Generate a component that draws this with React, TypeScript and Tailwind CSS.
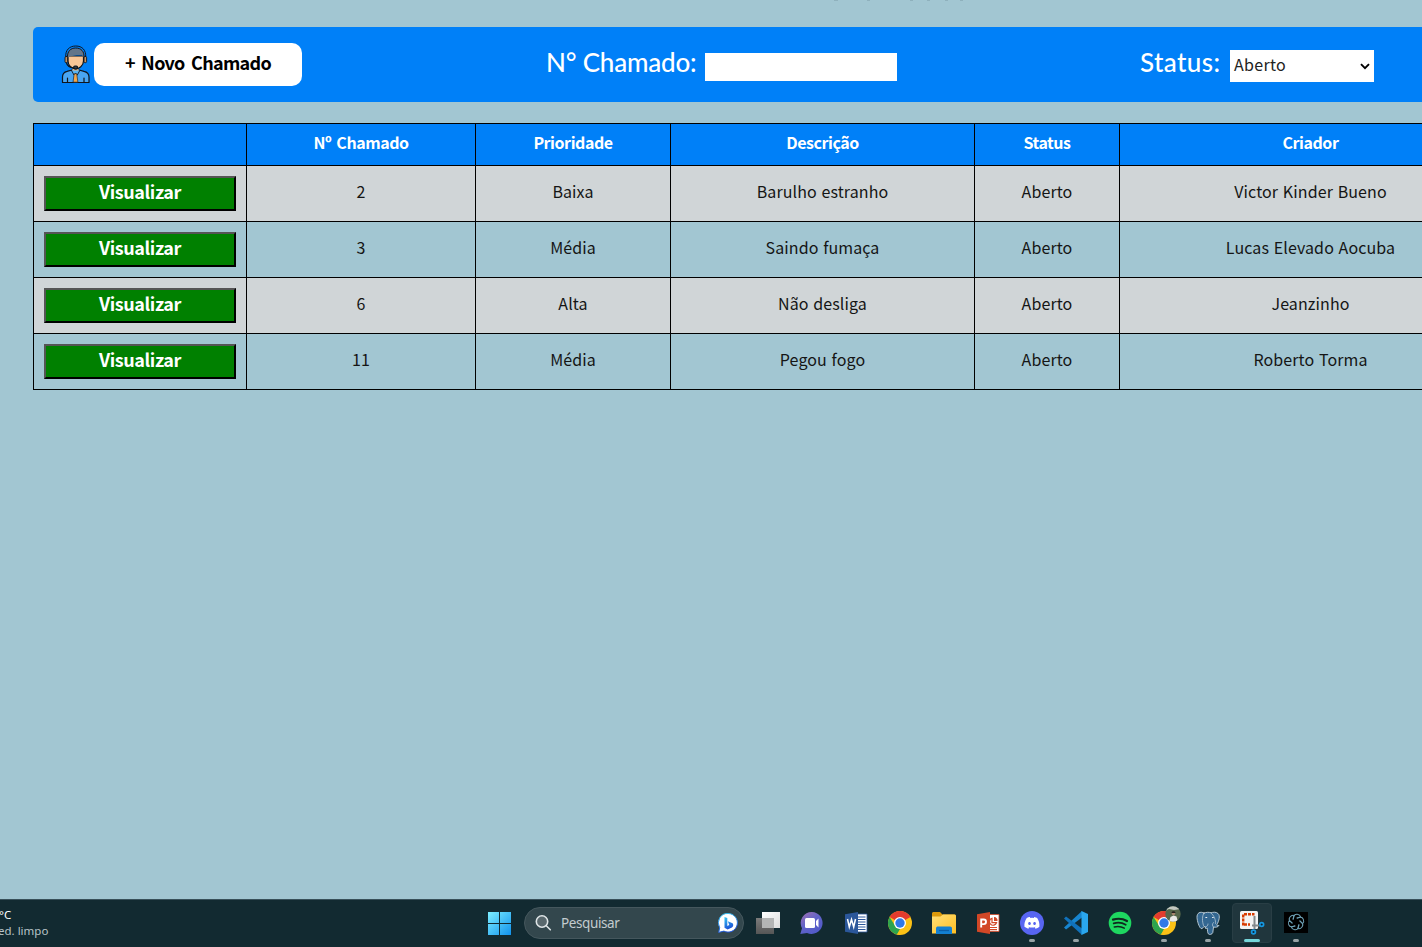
import React from "react";

const columns = ["", "Nº Chamado", "Prioridade", "Descrição", "Status", "Criador"];
const tickets = [
  ["2", "Baixa", "Barulho estranho", "Aberto", "Victor Kinder Bueno"],
  ["3", "Média", "Saindo fumaça", "Aberto", "Lucas Elevado Aocuba"],
  ["6", "Alta", "Não desliga", "Aberto", "Jeanzinho"],
  ["11", "Média", "Pegou fogo", "Aberto", "Roberto Torma"],
];

function Attendant() {
  return (
    <svg width="30" height="40" viewBox="0 0 30 40" fill="none" stroke="#10151c" strokeWidth="1.2" strokeLinejoin="round" strokeLinecap="round">
      <path d="M1.500 38.500v-5.500c0-3.500 1.500-5 4.500-5.700l5-1.300h7l5 1.300c3 .7 5 2.200 5 5.700v5.500z" fill="#49a5f2" />
      <path d="M11.500 22v4.500l3 3.500 3-3.500V22z" fill="#eab47f" stroke="none" />
      <path d="M7 12v5c0 4.500 4 8 7.500 8s8-3.500 8-8v-5z" fill="#fac696" />
      <path d="M6.800 13.500C5.500 7.500 9 4.300 14.800 4.300s9.500 3.200 8 9.200l-2-2.800c-2 .6-3.500.3-5 .3-3 .8-6 1-9 2.500z" fill="#63758a" stroke="none" />
      <path d="M4.800 13C4 6 8.500 2 14.800 2s10.500 4 9.900 11M6.500 12.500C6.300 7.500 9.500 4 14.800 4s8.500 3.500 8.200 8.500" strokeWidth="1" />
      <rect x="4" y="12.500" width="2.600" height="6.200" rx="1.200" fill="#c6905f" strokeWidth=".9" />
      <rect x="23" y="12.500" width="2.600" height="6.200" rx="1.200" fill="#c6905f" strokeWidth=".9" />
      <path d="M5.500 19c.8 3 4 4.600 7.500 5" />
      <rect x="12.700" y="22" width="3.800" height="2.800" rx="1.200" fill="#333c48" />
      <path d="M10.500 26.500 13 31l1.600-1.500L16.300 31l2.500-4.500" fill="#56b4f6" strokeWidth=".9" />
      <path d="M13.500 29.700h2.200l1.200 8.500h-4.500z" fill="#f3a64a" strokeWidth=".6" />
      <path d="M6.500 34v4M23 34v4" />
    </svg>
  );
}

function WindowsLogo() {
  return (
    <svg width="24" height="24" viewBox="0 0 24 24">
      <defs>
        <linearGradient id="win" x1="0" y1="0" x2="1" y2="1">
          <stop stopColor="#7ceeff" />
          <stop offset="1" stopColor="#1192ed" />
        </linearGradient>
      </defs>
      <path fill="url(#win)" d="M1 0h11v11H1zM13 0h11v11H13zM1 12h11v11H1zM13 12h11v11H13z" />
    </svg>
  );
}

function Bing() {
  return (
    <svg width="20" height="20" viewBox="0 0 20 20">
      <defs>
        <linearGradient id="bing" x1="0" y1="0" x2=".3" y2="1">
          <stop stopColor="#35c8f2" />
          <stop offset="1" stopColor="#1b52d8" />
        </linearGradient>
      </defs>
      <path d="M10.200.500a9.300 9.300 0 1 1-4.300 17.600L.7 19.400l1-4.700A9.300 9.300 0 0 1 10.200.500z" fill="#fff" stroke="url(#bing)" strokeWidth="1" />
      <path d="M6.500 4l2.800 1v8l2-1.100-1.500-3.600 4.800 2c1.300 1.600.5 3.600-.7 4.300l-4.300 2-3.100-1.900z" fill="url(#bing)" />
    </svg>
  );
}

function TaskView() {
  return (
    <svg width="24" height="24" viewBox="0 0 24 24">
      <defs>
        <linearGradient id="tvw" x1="0" y1="0" x2="1" y2="1"><stop stopColor="#fff" /><stop offset="1" stopColor="#dcdcdc" /></linearGradient>
        <linearGradient id="tvg" x1="0" y1="0" x2="0" y2="1"><stop stopColor="#7b7b7b" /><stop offset="1" stopColor="#565656" /></linearGradient>
      </defs>
      <path d="M6 1h18v16H6z" fill="url(#tvw)" />
      <path d="M0 7h18v16H0z" fill="url(#tvg)" />
      <path d="M6 7h12v10H6z" fill="#b4b5b5" />
    </svg>
  );
}

function Meet() {
  return (
    <svg width="24" height="24" viewBox="0 0 24 24">
      <defs><linearGradient id="meet" x1="0" y1="0" x2=".7" y2="1"><stop stopColor="#a36fb0" /><stop offset=".5" stopColor="#6264c8" /><stop offset="1" stopColor="#5059c9" /></linearGradient></defs>
      <path d="M12 1a11 11 0 1 1-5 21L.3 23 2 17.200A11 11 0 0 1 12 1z" fill="url(#meet)" />
      <rect x="5" y="7" width="10" height="10" rx="1.500" fill="#fff" />
      <path d="m16 10 2.500-2.500v9L16 14z" fill="#fff" />
    </svg>
  );
}

function Word() {
  return (
    <svg width="24" height="24" viewBox="0 0 24 24">
      <path d="M12 3h11v18H12z" fill="#fff" stroke="#2b579a" strokeWidth=".8" />
      <path d="M14 6h7.500M14 8.500h7.500M14 11h7.500M14 13.500h7.500M14 16h7.500M14 18.500h7.500" stroke="#2b579a" />
      <path d="M1 3.200 14 1v22L1 20.800z" fill="#2b579a" />
      <path d="m3.500 8 1.800 8 2.200-7.500L9.700 16l1.800-8" fill="none" stroke="#fff" strokeWidth="1.500" />
    </svg>
  );
}

function PowerPoint() {
  return (
    <svg width="24" height="24" viewBox="0 0 24 24">
      <path d="M12 3.500h11v17H12z" fill="#fff" stroke="#d24726" strokeWidth=".8" />
      <path d="M18 6v4h3.500A3.800 3.800 0 0 0 18 6z" fill="#d24726" />
      <path d="M16 7.200a3.600 3.600 0 1 0 4.500 4.500H16zM14 16.500h7M14 18.700h7" fill="none" stroke="#d24726" strokeWidth="1.200" />
      <path d="M1 3.200 14 1v22L1 20.800z" fill="#d24726" />
      <path d="M5.200 16.500V8.500h2.500a2.300 2.300 0 0 1 0 4.600H5.200" fill="none" stroke="#fff" strokeWidth="1.900" />
    </svg>
  );
}

function Chrome() {
  return (
    <svg width="24" height="24" viewBox="0 0 24 24">
      <circle cx="12" cy="12" r="12" fill="#fbc116" />
      <path d="M12 12 1.600 6A12 12 0 0 1 22.400 6z" fill="#e33b2e" />
      <path d="M1.600 6 7.200 15l4.800 3-3 5.600A12 12 0 0 1 1.600 6z" fill="#2da44e" />
      <path d="m16.800 14.800-4.800 9A12 12 0 0 1 9 23.600l4-6z" fill="#fbc116" />
      <circle cx="12" cy="12" r="6" fill="#fff" />
      <circle cx="12" cy="12" r="4.700" fill="#3079e8" />
    </svg>
  );
}

function ChromeProfile() {
  return (
    <span className="relative block size-6">
      <Chrome />
      <svg className="absolute -top-[5px] left-[13px]" width="16" height="16" viewBox="0 0 16 16">
        <defs><clipPath id="face"><circle cx="8" cy="8" r="7.700" /></clipPath></defs>
        <g clipPath="url(#face)">
          <path fill="#55664b" d="M0 0h16v16H0z" />
          <path fill="#c3c8c2" d="M0 0h16v3L9 4 4 3 0 5z" />
          <path fill="#e9e9e7" d="M4 16l1.500-5 3-1.500 3 1L13 16z" />
          <circle cx="8.500" cy="7.500" r="1.700" fill="#a7856d" />
          <path fill="#26211f" d="M6.500 7c0-2.500 4-2.500 4 0z" />
        </g>
      </svg>
    </span>
  );
}

function Folder() {
  return (
    <svg width="24" height="24" viewBox="0 0 24 24">
      <defs><linearGradient id="fold" x1="0" y1="0" x2="1" y2="1"><stop stopColor="#ffe07a" /><stop offset="1" stopColor="#ffbe21" /></linearGradient></defs>
      <path d="M0 2.500C0 1.700.700 1 1.500 1H8l2.500 2.500H22c1.200 0 2 .7 2 1.800V9H0z" fill="#dc9a0b" />
      <path d="M0 5.500h8.500L11 3.500h11.500c.8 0 1.500.700 1.500 1.500V22.500H0z" fill="url(#fold)" />
      <path d="M4 23v-5.500C4 16 5 15.500 6 15.500h12c1.200 0 2 .8 2 2V23z" fill="#1380d2" />
      <path d="M7 19.500h10" stroke="#0b5ea8" strokeWidth="1.300" />
    </svg>
  );
}

function Discord() {
  return (
    <svg width="24" height="24" viewBox="0 0 24 24">
      <circle cx="12" cy="12" r="12" fill="#5865f2" />
      <path transform="translate(4.400 4.300) scale(.635)" fill="#fff" d="M20.317 4.370a19.800 19.800 0 0 0-4.885-1.515c-.21.375-.444.864-.608 1.250a18.300 18.300 0 0 0-5.487 0 12.600 12.600 0 0 0-.617-1.250A19.700 19.700 0 0 0 3.677 4.370C.533 9.046-.32 13.580.099 18.058a19.900 19.900 0 0 0 5.993 3.030c.462-.63.874-1.295 1.226-1.994a13 13 0 0 1-1.872-.892l.372-.292c3.928 1.793 8.180 1.793 12.062 0l.373.292a12.300 12.300 0 0 1-1.873.892c.36.698.772 1.362 1.225 1.993a19.800 19.800 0 0 0 6.002-3.030c.5-5.177-.838-9.674-3.549-13.660zM8.020 15.330c-1.183 0-2.157-1.085-2.157-2.419s.955-2.419 2.157-2.419 2.176 1.096 2.157 2.420c0 1.333-.956 2.418-2.157 2.418zm7.975 0c-1.183 0-2.157-1.085-2.157-2.419s.955-2.419 2.157-2.419 2.176 1.096 2.157 2.420c0 1.333-.946 2.418-2.157 2.418z" />
    </svg>
  );
}

function Code() {
  return (
    <svg width="24" height="24" viewBox="0 0 24 24">
      <path d="m0 16.500 2 2 16-12V0z" fill="#1785cf" />
      <path d="m0 7.500 2-2 16 12V24z" fill="#1072bc" />
      <path d="M17.500 0 24 3v18l-6.500 3z" fill="#2aa7ee" />
    </svg>
  );
}

function Spotify() {
  return (
    <svg width="24" height="24" viewBox="0 0 24 24">
      <circle cx="12" cy="12" r="11.300" fill="#1ed760" />
      <g fill="none" stroke="#10271e" strokeLinecap="round">
        <path d="M5 8.600c4.700-1.400 10-.9 14 1.400" strokeWidth="2.200" />
        <path d="M5.700 12.400c4-1.200 8.600-.7 12 1.400" strokeWidth="1.800" />
        <path d="M6.300 15.900c3.600-.9 7-.5 10 1.300" strokeWidth="1.500" />
      </g>
    </svg>
  );
}

function Postgres() {
  return (
    <svg width="24" height="24" viewBox="0 0 24 24" strokeLinejoin="round" strokeLinecap="round">
      <path d="M8 2C4 0 .8 2 1 6.500 1.200 10 3 16 5 17.500c1.500.7 2-1 3-2l1.500.5c-1 2 .5 1.500 1.800 1.200.2 2 .2 4.500 1 5.600 1 1.200 4 .7 4.500-1.300l.7-5.500c2 .5 4.500.2 5.500-1.500-1.500.3-2.500 0-2.200-.7C23 10 24.500 4.500 22 2.500c-2-1.800-5-1.400-7-.7-2-.8-5-.6-7 .2z" fill="#336791" stroke="#c3d2dc" strokeWidth=".9" />
      <path d="M8 2C6 5 6 10 7.500 14.500M15 2c3 2.500 5 7 4.500 10.500M9.500 16c1.500-.5 2.500-1.500 2.500-3M17.500 16c-1.500-1-1.500-3 0-4.500" fill="none" stroke="#c3d2dc" strokeWidth=".7" />
      <path d="M9.800 6.500h1M16.500 6.500h.8" stroke="#fff" strokeWidth=".9" />
    </svg>
  );
}

function Snip() {
  return (
    <svg width="26" height="24" viewBox="0 0 26 24">
      <rect x="1" y="0" width="18" height="18" rx="1.500" fill="#f3f3f3" />
      <path d="M4.200 14.500V3.300h11.300" fill="none" stroke="#d83b01" strokeWidth="2.400" strokeDasharray="3 1" />
      <path d="M5 13.500h6" stroke="#d83b01" strokeWidth="2.400" strokeDasharray="3 1" />
      <path d="M15.500 5v13M13 14.500h8" stroke="#84898c" strokeWidth="2" />
      <circle cx="22.700" cy="13.500" r="1.900" fill="#123" stroke="#1598e0" strokeWidth="1.700" />
      <circle cx="14.500" cy="21" r="1.900" fill="#123" stroke="#1598e0" strokeWidth="1.700" />
    </svg>
  );
}

function Knot() {
  return (
    <svg className="-mt-[2px]" width="24" height="21" viewBox="0 0 24 21">
      <path d="M0 0h24v21H0z" fill="#000" />
      <g transform="translate(12 10) rotate(12)" fill="none" stroke="#6fa3b8" strokeWidth="1">
        {[0, 60, 120, 180, 240, 300].map((angle) => (
          <path key={angle} transform={`rotate(${angle})`} d="M-3.200-2V-5.300C-3-8.300 2-8.700 3.500-5.900L-.3-3.900" />
        ))}
      </g>
    </svg>
  );
}

const apps = [
  { name: "tasks", icon: <TaskView />, state: "" },
  { name: "meet", icon: <Meet />, state: "" },
  { name: "word", icon: <Word />, state: "" },
  { name: "chrome", icon: <Chrome />, state: "" },
  { name: "files", icon: <Folder />, state: "" },
  { name: "slides", icon: <PowerPoint />, state: "" },
  { name: "discord", icon: <Discord />, state: "open" },
  { name: "code", icon: <Code />, state: "open" },
  { name: "spotify", icon: <Spotify />, state: "" },
  { name: "profile", icon: <ChromeProfile />, state: "open" },
  { name: "postgres", icon: <Postgres />, state: "open" },
  { name: "snip", icon: <Snip />, state: "active" },
  { name: "knot", icon: <Knot />, state: "open" },
];

function Taskbar() {
  return (
    <footer className="flex h-12 shrink-0 border-t border-[#38505a] bg-[#122a31] font-['Noto_Sans',sans-serif]">
      <div className="w-[477px] pt-[7px] text-[11.5px] leading-[16px] text-[#b8c3c7]">
        <p className="-ml-[1px] text-white">°C</p>
        <p className="-ml-[2px]">ed. limpo</p>
      </div>
      <div className="flex w-11 items-center justify-center"><WindowsLogo /></div>
      <div className="mt-[7px] mr-[2px] ml-[3px] flex h-8 w-[220px] items-center rounded-full border border-[#45575d] bg-[#33474d] pr-[5px] pl-[10px]">
        <svg width="18" height="18" viewBox="0 0 18 18" fill="none" stroke="#dfe5e7" strokeWidth="1.600" strokeLinecap="round">
          <circle cx="7" cy="7.500" r="5.700" fill="#59686d" />
          <path d="m11.300 11.800 4 4" />
        </svg>
        <span className="ml-2 flex-1 text-[13.500px] tracking-[-0.4px] text-[#c3cccf]">Pesquisar</span>
        <Bing />
      </div>
      {apps.map((app) => (
        <div key={app.name} className="flex w-11 justify-center pt-[3px]">
          <div className={app.state === "active" ? "flex h-10 w-10 flex-col items-center rounded border border-[#293e45] bg-[#20363d]" : "flex h-10 w-10 flex-col items-center border border-transparent"}>
            <div className="mt-[7px] flex h-6 items-center">{app.icon}</div>
            {app.state === "open" && <i className="mt-[4px] h-[3px] w-[6px] rounded-full bg-[#98a3a6]" />}
            {app.state === "active" && <i className="mt-[4px] h-[3px] w-4 rounded-full bg-[#76d6da]" />}
          </div>
        </div>
      ))}
    </footer>
  );
}

export default function App() {
  return (
    <div className="flex h-[947px] w-[1422px] flex-col overflow-hidden bg-[#a2c6d2] font-['Noto_Sans_CJK_SC','Open_Sans',sans-serif] text-black">
      <main className="flex min-h-0 flex-1 flex-col overflow-hidden pl-[33px]">
        <div className="flex h-[27px] shrink-0 pl-[801px]">
          <i className="mr-[29px] h-px w-1 bg-[#8fb1bd]" />
          <i className="mr-[40px] h-px w-[3px] bg-[#8fb1bd]" />
          <i className="mr-[14px] h-px w-[3px] bg-[#8fb1bd]" />
          <i className="mr-[15px] h-px w-[3px] bg-[#8fb1bd]" />
          <i className="mr-[12px] h-px w-[3px] bg-[#8fb1bd]" />
          <i className="h-px w-[3px] bg-[#8fb1bd]" />
        </div>
        <section className="flex h-[75px] shrink-0 items-start rounded-l-[5px] bg-[#0080f8] pl-[28px] text-white">
          <div className="mt-[17px] w-[33px]"><Attendant /></div>
          <button className="mt-4 h-[43px] w-[208px] rounded-[10px] bg-white pb-[5px] text-[18px] leading-6 font-bold tracking-[-0.7px] text-black [word-spacing:3px]">+ Novo Chamado</button>
          <label className="mt-[17px] ml-[244px] w-[159px] font-['Lato',sans-serif] text-[26px] leading-9 font-medium tracking-[-0.2px] whitespace-nowrap">N° Chamado:</label>
          <input className="mt-[26px] h-[28px] w-[192px] bg-white text-black outline-none" />
          <label className="mt-[17px] ml-[243px] w-[90px] font-['Lato',sans-serif] text-[26px] leading-9 font-medium tracking-[0.4px] whitespace-nowrap">Status:</label>
          <div className="mt-[23px] flex h-8 w-36 items-center justify-between bg-white pr-1 pb-[2px] pl-1 text-[16px] leading-6 tracking-[0.3px] text-[#222]">
            <span className="-mt-[2px]">Aberto</span>
            <svg className="mt-[3px]" width="10" height="7" viewBox="0 0 10 7" fill="none" stroke="#000" strokeWidth="1.900"><path d="m1 1.200 4 4 4-4" /></svg>
          </div>
        </section>
        <section className="mt-[21px] w-[1467px] shrink-0 border-b border-black text-[16px]">
          <div className="grid h-[42px] grid-cols-[213px_229px_195px_304px_145px_382px] bg-[#0080f8] font-bold tracking-[-0.45px] text-white [word-spacing:2px]">
            {columns.map((title, i) => (
              <div key={i} className="flex items-center justify-center border-t border-l border-black pb-[5px]">{title}</div>
            ))}
          </div>
          {tickets.map((ticket) => (
            <div key={ticket[0]} className="grid h-14 grid-cols-[213px_229px_195px_304px_145px_382px] odd:bg-[#a2c6d2] even:bg-[#d0d5d7]">
              <div className="border-t border-l border-black pt-[10px] pl-[10px]">
                <button className="h-[35px] w-[192px] border-2 border-t-[#555] border-r-black border-b-black border-l-[#555] bg-[#008000] pb-[6px] text-[18px] leading-6 font-bold tracking-[-0.4px] text-white">Visualizar</button>
              </div>
              {ticket.map((value, i) => (
                <div key={i} className="flex items-center justify-center border-t border-l border-black pb-[6px] tracking-[0.1px] text-[#151515] [word-spacing:1px]">{value}</div>
              ))}
            </div>
          ))}
        </section>
      </main>
      <Taskbar />
    </div>
  );
}
